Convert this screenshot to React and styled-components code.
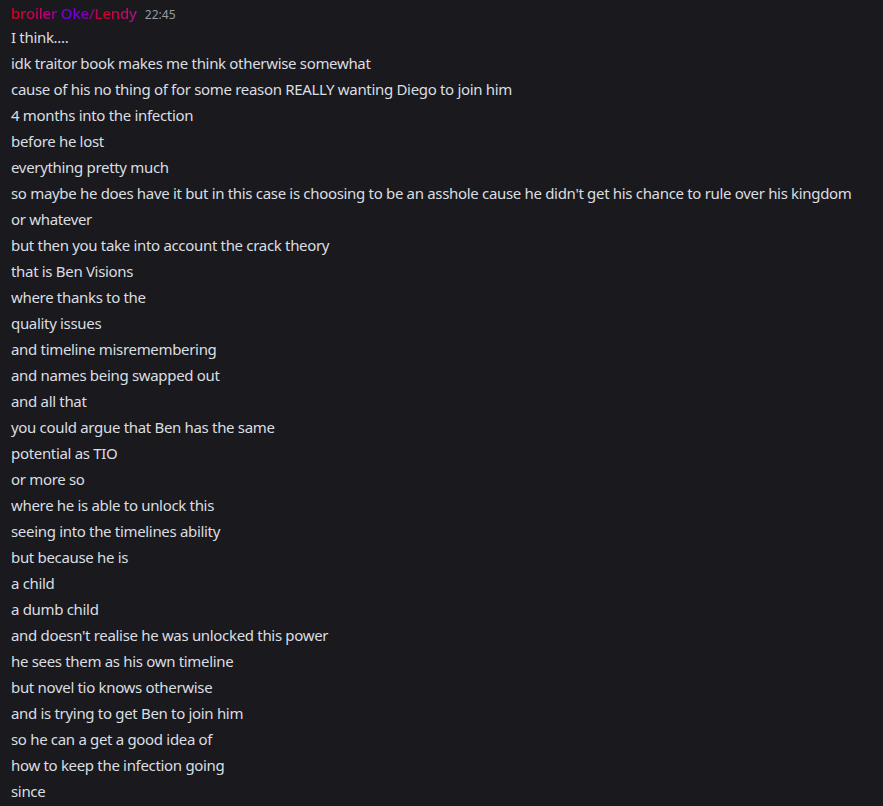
import React from 'react';
import styled, { createGlobalStyle } from 'styled-components';

const lines = [
  'I think....',
  'idk traitor book makes me think otherwise somewhat',
  'cause of his no thing of for some reason REALLY wanting Diego to join him',
  '4 months into the infection',
  'before he lost',
  'everything pretty much',
  "so maybe he does have it but in this case is choosing to be an asshole cause he didn't get his chance to rule over his kingdom",
  'or whatever',
  'but then you take into account the crack theory',
  'that is Ben Visions',
  'where thanks to the',
  'quality issues',
  'and timeline misremembering',
  'and names being swapped out',
  'and all that',
  'you could argue that Ben has the same',
  'potential as TIO',
  'or more so',
  'where he is able to unlock this',
  'seeing into the timelines ability',
  'but because he is',
  'a child',
  'a dumb child',
  "and doesn't realise he was unlocked this power",
  'he sees them as his own timeline',
  'but novel tio knows otherwise',
  'and is trying to get Ben to join him',
  'so he can a get a good idea of',
  'how to keep the infection going',
  'since',
];

const GlobalStyle = createGlobalStyle`
  html, body {
    margin: 0;
    background: #1a1a1e;
  }
`;

const Chat = styled.div`
  width: 883px;
  height: 806px;
  overflow: hidden;
  background: #1a1a1e;
  font-family: 'Noto Sans', 'Open Sans', sans-serif;
  color: #dbdee1;
  padding: 3px 12px 0 11px;
  box-sizing: border-box;
`;

const Header = styled.div`
  display: flex;
  align-items: baseline;
  gap: 8px;
  height: 21px;
`;

const Name = styled.span`
  font-size: 15px;
  font-weight: 500;
  letter-spacing: -0.2px;
  background: linear-gradient(to right, #e0001c 0%, #c8006a 25%, #6e00e4 45%, #7a00c8 58%, #d40020 72%, #b0108a 100%);
  -webkit-background-clip: text;
  background-clip: text;
  color: transparent;
`;

const Time = styled.span`
  font-size: 12px;
  color: #949ba4;
`;

const Line = styled.div`
  font-size: 15px;
  letter-spacing: -0.32px;
  line-height: 26px;
  white-space: nowrap;
`;

export default function App() {
  return (
    <>
      <GlobalStyle />
      <Chat>
        <Header>
          <Name>broiler Oke/Lendy</Name>
          <Time>22:45</Time>
        </Header>
        {lines.map((l, i) => (
          <Line key={i}>{l}</Line>
        ))}
      </Chat>
    </>
  );
}
